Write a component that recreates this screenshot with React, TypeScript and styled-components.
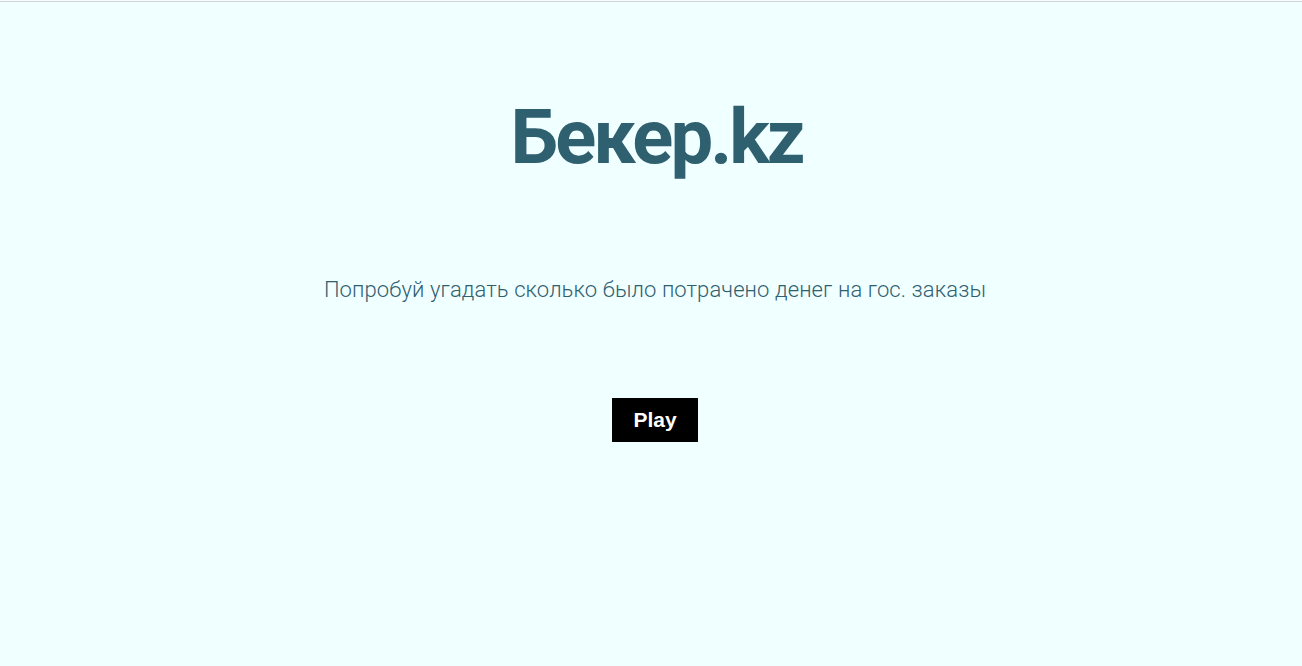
import React from "react";
import styled, { createGlobalStyle } from "styled-components";

const Global = createGlobalStyle`
  html, body { margin: 0; padding: 0; background: #f0ffff; }
  body { font-family: Roboto, "Noto Sans", sans-serif; }
`;

const Page = styled.div`
  min-height: 666px;
  box-sizing: border-box;
  padding-top: 1px;
  background: #f0ffff;
`;

const TopRule = styled.div`
  height: 1px;
  background: #d3d3d3;
`;

const Main = styled.main`
  display: flex;
  flex-direction: column;
  align-items: center;
  padding-left: 8px;
`;

const Title = styled.h1`
  margin: 90px 0 0 3px;
  font-family: Roboto, sans-serif;
  font-weight: 700;
  font-size: 76px;
  line-height: normal;
  color: #2f6070;
  letter-spacing: -3px;
`;

const Subtitle = styled.p`
  margin: 95px 0 0 0;
  font-family: Roboto, sans-serif;
  font-weight: 300;
  font-size: 22px;
  line-height: normal;
  letter-spacing: 0.1px;
  color: #2f6070;
`;

const PlayButton = styled.button`
  margin-top: 96px;
  border: none;
  background: #000;
  color: #fff;
  font-family: "Liberation Sans", Arial, sans-serif;
  font-weight: 700;
  font-size: 21px;
  padding: 0 21px;
  height: 44px;
  cursor: pointer;
`;

export default function App() {
  return (
    <Page>
      <Global />
      <TopRule />
      <Main>
        <Title>Бекер.kz</Title>
        <Subtitle>Попробуй угадать сколько было потрачено денег на гос. заказы</Subtitle>
        <PlayButton>Play</PlayButton>
      </Main>
    </Page>
  );
}
